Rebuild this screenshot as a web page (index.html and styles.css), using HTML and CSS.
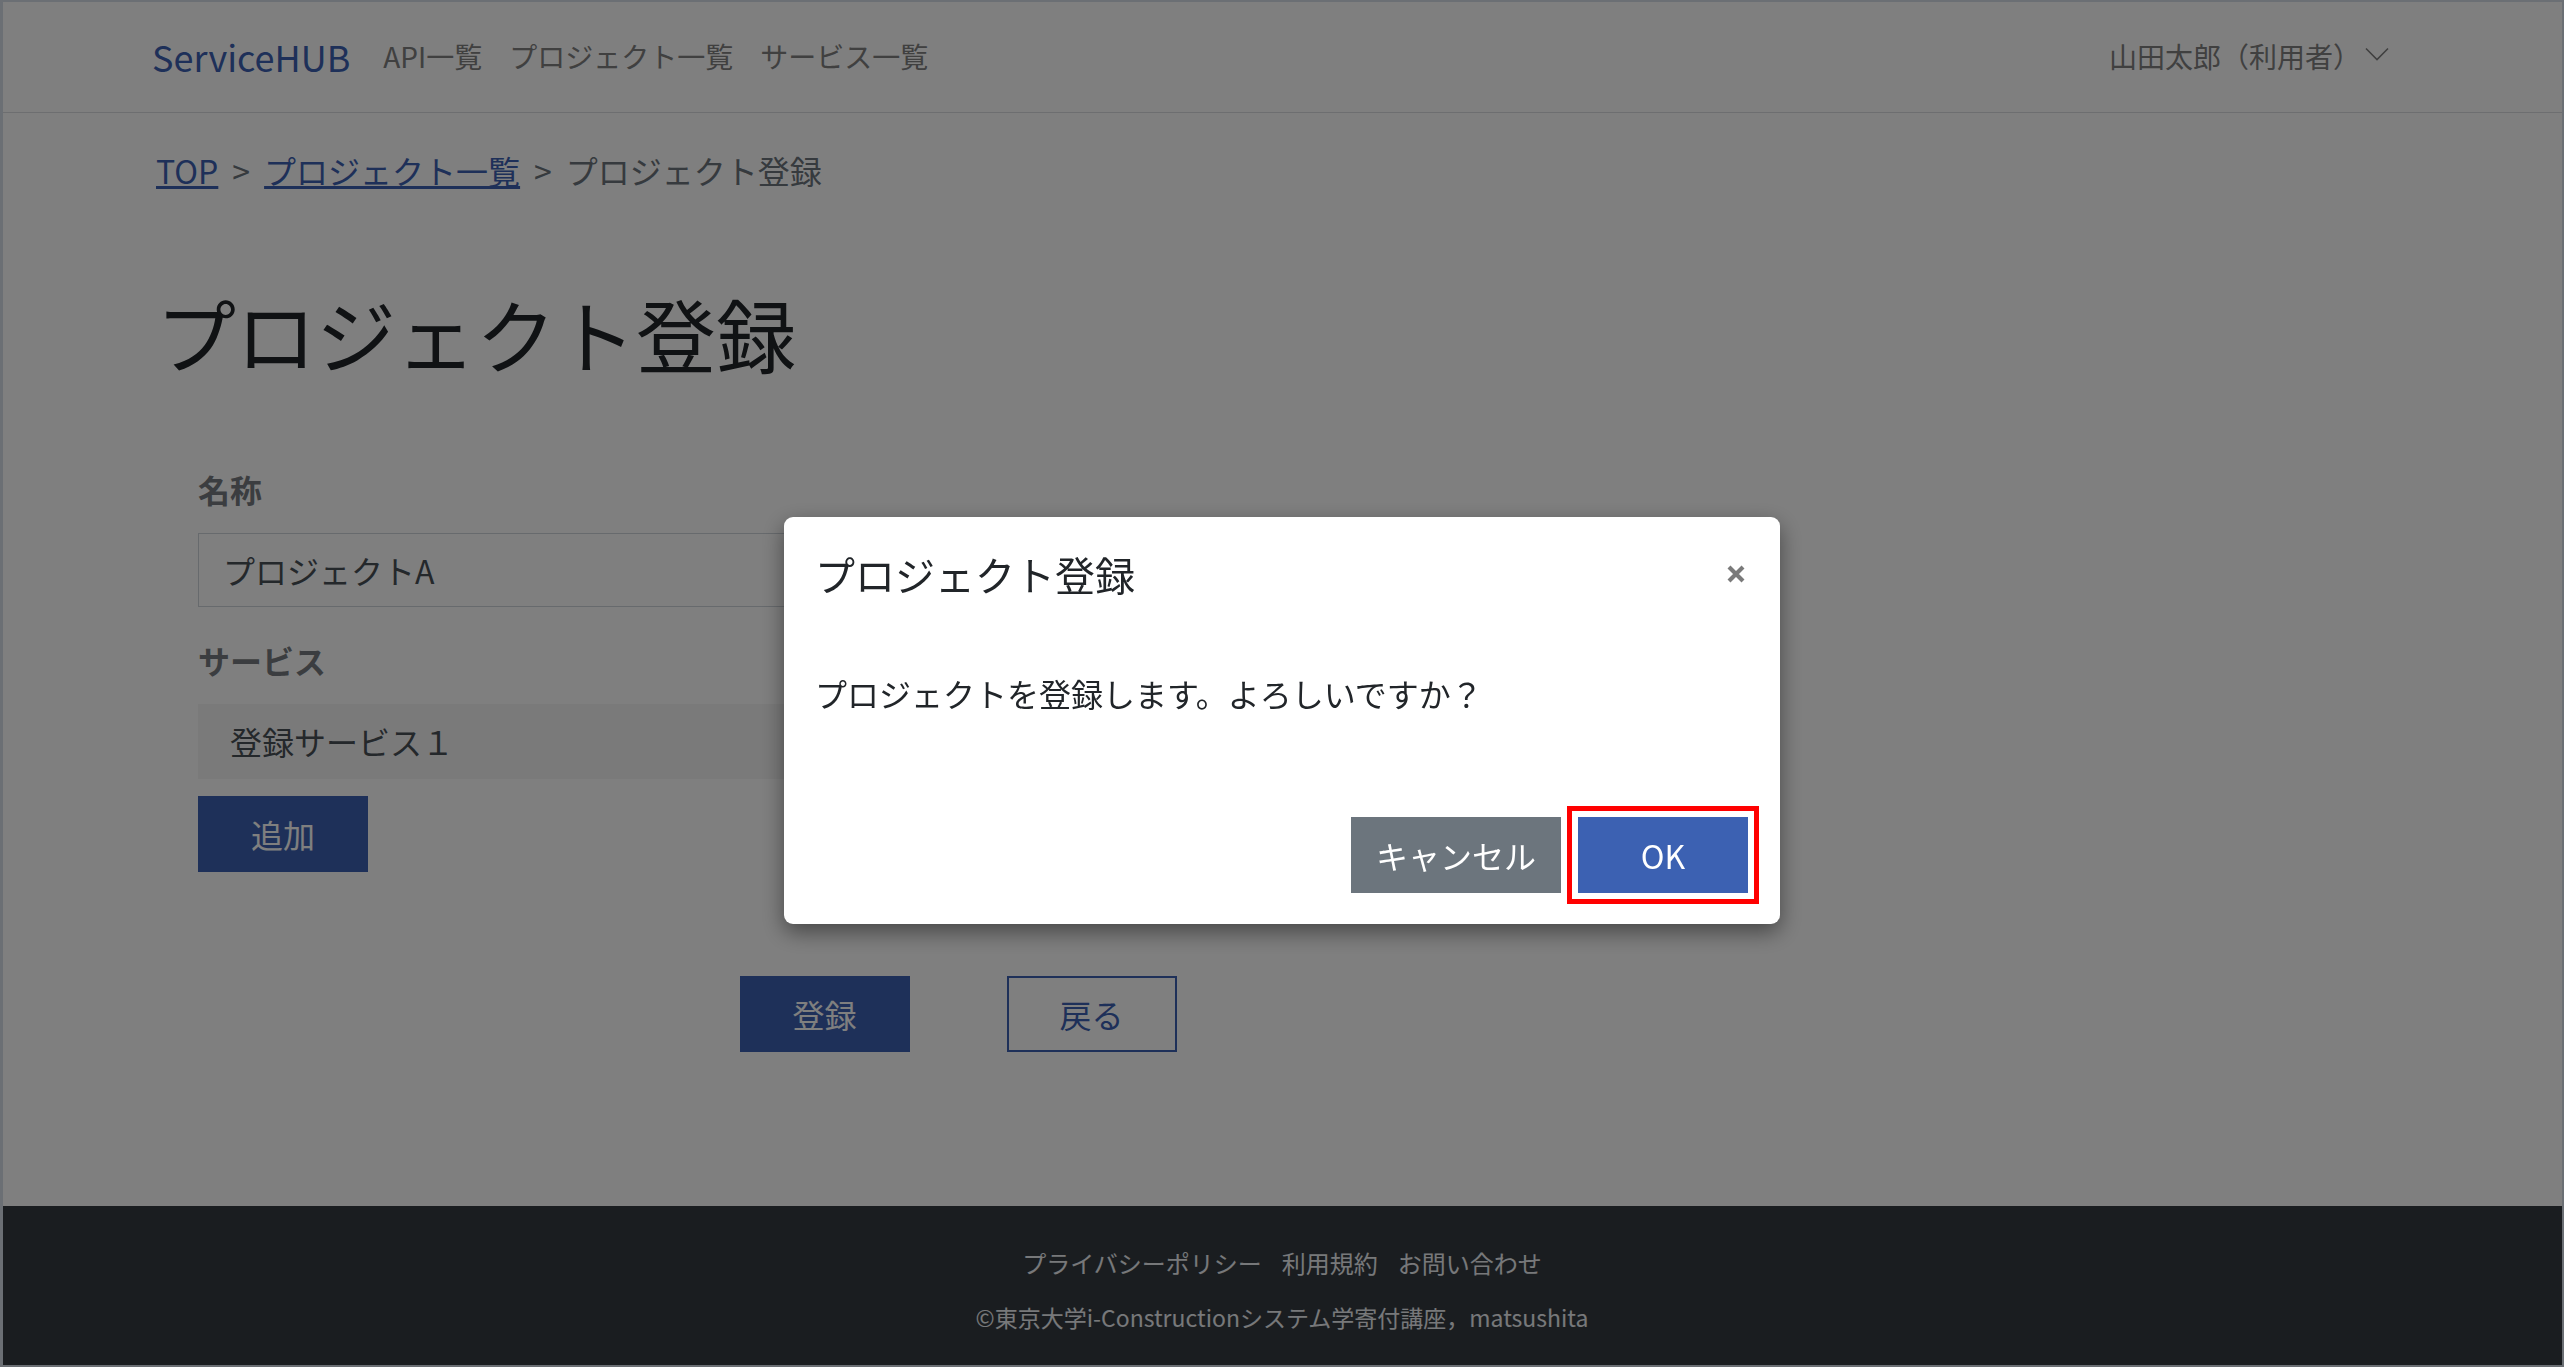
FILE: index.html
```html
<!DOCTYPE html>
<html lang="ja">
<head>
<meta charset="utf-8">
<title>プロジェクト登録 | ServiceHUB</title>
<link rel="stylesheet" href="styles.css">
</head>
<body>
  <div class="page">
    <header class="navbar">
      <a class="brand" href="#">ServiceHUB</a>
      <nav class="nav-links">
        <a href="#">API一覧</a>
        <a href="#">プロジェクト一覧</a>
        <a href="#">サービス一覧</a>
      </nav>
      <div class="user-menu">
        <span>山田太郎（利用者）</span>
        <svg class="chevron" width="24" height="14" viewBox="0 0 24 14"><polyline points="1,1.5 12,12.5 23,1.5" fill="none" stroke="currentColor" stroke-width="1.6"/></svg>
      </div>
    </header>

    <main class="container">
      <ol class="breadcrumb">
        <li><a href="#">TOP</a></li>
        <li><a href="#">プロジェクト一覧</a></li>
        <li class="active">プロジェクト登録</li>
      </ol>

      <h1 class="page-title">プロジェクト登録</h1>

      <form class="project-form">
        <label class="field-label">名称</label>
        <input class="form-control" type="text" value="プロジェクトA">

        <label class="field-label field-label-service">サービス</label>
        <ul class="service-list">
          <li>登録サービス１</li>
        </ul>
        <button type="button" class="btn btn-primary btn-add">追加</button>

        <div class="form-actions">
          <button type="button" class="btn btn-primary">登録</button>
          <button type="button" class="btn btn-outline">戻る</button>
        </div>
      </form>
    </main>

    <footer class="site-footer">
      <ul class="footer-links">
        <li><a href="#">プライバシーポリシー</a></li>
        <li><a href="#">利用規約</a></li>
        <li><a href="#">お問い合わせ</a></li>
      </ul>
      <p class="copyright">©東京大学i-Constructionシステム学寄付講座，matsushita</p>
    </footer>
  </div>

  <div class="modal-backdrop"></div>

  <div class="modal">
    <div class="modal-dialog">
      <div class="modal-header">
        <h5 class="modal-title">プロジェクト登録</h5>
        <button type="button" class="close" aria-label="Close">
          <svg width="20" height="20" viewBox="0 0 20 20"><path d="M3 3 L17 17 M17 3 L3 17" stroke="currentColor" stroke-width="4.2" fill="none"/></svg>
        </button>
      </div>
      <div class="modal-body">プロジェクトを登録します。よろしいですか？</div>
      <div class="modal-footer">
        <button type="button" class="btn btn-secondary">キャンセル</button>
        <button type="button" class="btn btn-primary btn-ok">OK</button>
      </div>
    </div>
  </div>

  <div class="screen-frame"></div>
</body>
</html>
```

FILE: styles.css
```css
html, body
{
  margin: 0;
  padding: 0;
}

body
{
  font-family: "Noto Sans CJK JP", "Noto Sans", sans-serif;
  font-size: 32px;
  line-height: 1.5;
  color: #212529;
  background: #fff;
}

a { color: #3c61b2; }

.page
{
  min-height: 100vh;
  display: flex;
  flex-direction: column;
}

/* top bar */
.navbar
{
  height: 112px;
  display: flex;
  align-items: center;
  padding: 0 175px 0 152px;
  border-bottom: 1px solid #dadde0;
  background: #fff;
}

.brand
{
  font-size: 36px;
  line-height: 60px;
  text-decoration: none;
  margin-right: 33px;
}

.nav-links
{
  display: flex;
  gap: 27px;
}

.nav-links a,
.user-menu
{
  font-size: 28px;
  color: #808080;
  text-decoration: none;
}

.user-menu
{
  margin-left: auto;
  display: flex;
  align-items: center;
  gap: 4px;
}

.chevron { margin-top: -4px; }

/* main area */
.container
{
  flex: 1;
  padding: 0 156px;
}

.breadcrumb
{
  list-style: none;
  margin: 33px 0 0;
  padding: 0;
  display: flex;
  line-height: 48px;
}

.breadcrumb li + li::before
{
  content: ">";
  color: #6c757d;
  padding: 0 14px;
}

.breadcrumb .active { color: #6c757d; }

.page-title
{
  margin: 90px 0 0;
  font-size: 80px;
  font-weight: 400;
  line-height: 96px;
}

.project-form
{
  margin-left: 42px;
  width: 1520px;
}

.field-label
{
  display: block;
  margin-top: 85px;
  font-weight: 700;
  color: #777b80;
}

.field-label-service { margin-top: 29px; }

.form-control
{
  display: block;
  box-sizing: border-box;
  width: 100%;
  height: 74px;
  margin-top: 20px;
  padding: 0 24px;
  font: inherit;
  color: #495057;
  background: #fff;
  border: 1px solid #ced4da;
  border-radius: 0;
}

.service-list
{
  list-style: none;
  margin: 20px 0 0;
  padding: 0;
}

.service-list li
{
  height: 75px;
  box-sizing: border-box;
  padding: 13px 32px;
  background: #f5f5f5;
  color: #495057;
}

.btn
{
  font: inherit;
  line-height: 48px;
  min-width: 170px;
  padding: 13px 24px;
  border: 1px solid transparent;
  border-radius: 0;
  cursor: pointer;
}

.btn-primary
{
  background: #3c61b2;
  border-color: #3c61b2;
  color: #fff;
}

.btn-outline
{
  background: #fff;
  border: 2px solid #3c61b2;
  padding: 12px 24px;
  color: #3c61b2;
}

.btn-secondary
{
  background: #6c757d;
  border-color: #6c757d;
  color: #fff;
}

.btn-add { margin-top: 17px; }

.form-actions
{
  margin-top: 104px;
  display: flex;
  justify-content: center;
  gap: 97px;
}

/* footer */
.site-footer
{
  background: #343a40;
  color: #eef1f4;
  font-size: 24px;
  line-height: 36px;
  text-align: center;
  padding: 39px 0 32px;
}

.footer-links
{
  list-style: none;
  margin: 0;
  padding: 0;
  display: flex;
  justify-content: center;
  gap: 20px;
}

.footer-links a
{
  color: #eef1f4;
  text-decoration: none;
}

.copyright
{
  margin: 18px 0 0;
  font-size: 23px;
}

/* dialog */
.modal-backdrop
{
  position: fixed;
  inset: 0;
  background: rgba(0, 0, 0, .5);
}

.modal
{
  position: fixed;
  inset: 0;
}

.modal-dialog
{
  width: 996px;
  margin: 517px auto 0;
  background: #fff;
  border-radius: 9px;
  box-shadow: 0 8px 22px rgba(0, 0, 0, .45);
}

.modal-header
{
  display: flex;
  align-items: center;
  justify-content: space-between;
  padding: 27px 34px 0 31px;
}

.modal-title
{
  margin: 0;
  font-size: 40px;
  font-weight: 400;
  line-height: 60px;
}

.close
{
  padding: 0;
  border: 0;
  background: none;
  color: #7a7a7a;
  display: flex;
}

.modal-body
{
  padding: 65px 31px 0;
  line-height: 48px;
}

.modal-footer
{
  display: flex;
  justify-content: flex-end;
  gap: 17px;
  padding: 100px 32px 31px;
}

.btn-ok
{
  outline: 5px solid #f00;
  outline-offset: 6px;
}

.screen-frame
{
  position: fixed;
  inset: 0;
  border: 2px solid #6b6f74;
  border-left-width: 3px;
  pointer-events: none;
}
```
